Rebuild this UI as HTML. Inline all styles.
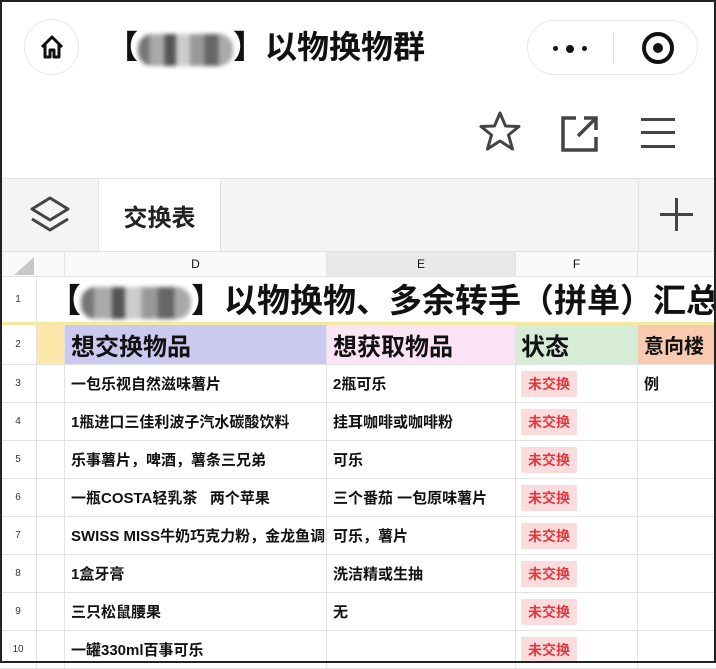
<!DOCTYPE html>
<html><head><meta charset="utf-8"><style>
*{margin:0;padding:0;box-sizing:border-box}
body{width:716px;height:663px;overflow:hidden;background:#fff;font-family:"Liberation Sans","Noto Sans CJK SC",sans-serif;position:relative;color:#111}
.frame{position:absolute;left:0;top:0;width:716px;height:663px;border:2px solid #222;z-index:10;pointer-events:none}
.abs{position:absolute}
.blur{display:inline-block;width:100px;height:32px;vertical-align:middle;background:linear-gradient(90deg,#777 0 12%,#aaa 12% 28%,#555 28% 40%,#ccc 40% 55%,#999 55% 70%,#666 70% 85%,#aaa 85%);filter:blur(2px);border-radius:14px}
.row{position:absolute;left:0;width:716px;border-bottom:1px solid #e3e3e3}
.c{position:absolute;top:0;height:100%;display:flex;align-items:center;border-right:1px solid #e3e3e3;font-size:15px;font-weight:bold;white-space:nowrap;overflow:hidden}
.rn{left:0;width:37px;justify-content:center;font-size:10px;font-weight:normal;color:#333}
.s{left:37px;width:28px}
.d{left:65px;width:262px;padding-left:6px}
.e{left:327px;width:189px;padding-left:6px}
.f{left:516px;width:122px;padding-left:5px}
.g{left:638px;width:78px;padding-left:6px;border-right:none}
.b{background:#fbdcdc;color:#e0383e;font-size:14px;padding:3px 7px;border-radius:2px}
</style></head><body>
<div class="frame"></div>
<div class="abs" style="left:24px;top:19px;width:55px;height:56px;border:1px solid #e8e8e8;border-radius:50%;display:flex;align-items:center;justify-content:center">
<svg width="26" height="26" viewBox="0 0 26 26"><path d="M3 13 L13 3 L23 13 M6 10 V23 H11 V16 H15 V23 H20 V10" fill="none" stroke="#111" stroke-width="3" stroke-linejoin="round"/></svg></div>
<div class="abs" style="left:106px;top:26px;font-size:32px;font-weight:bold;line-height:42px;white-space:nowrap">【<span class="blur" style="width:95px"></span>】以物换物群</div>
<div class="abs" style="left:527px;top:20px;width:171px;height:55px;border:1px solid #e8e8e8;border-radius:28px">
<div class="abs" style="left:25px;top:25px;width:5px;height:5px;background:#111;border-radius:50%"></div>
<div class="abs" style="left:38px;top:24px;width:8px;height:8px;background:#111;border-radius:50%"></div>
<div class="abs" style="left:54px;top:25px;width:5px;height:5px;background:#111;border-radius:50%"></div>
<div class="abs" style="left:85px;top:12px;width:1px;height:30px;background:#e0e0e0"></div>
<div class="abs" style="left:114px;top:11px;width:32px;height:32px;border:4px solid #111;border-radius:50%"><div class="abs" style="left:7px;top:7px;width:10px;height:10px;background:#111;border-radius:50%"></div></div>
</div>
<svg class="abs" style="left:478px;top:110px" width="44" height="44" viewBox="0 0 44 44"><path d="M22 3 L27.5 16 L41 16.5 L30.5 25 L34.5 39 L22 31 L9.5 39 L13.5 25 L3 16.5 L16.5 16 Z" fill="none" stroke="#444" stroke-width="3" stroke-linejoin="round"/></svg>
<svg class="abs" style="left:560px;top:114px" width="40" height="40" viewBox="0 0 40 40"><path d="M16 4 H3 V36 H36 V23" fill="none" stroke="#444" stroke-width="3.5"/><path d="M18 22 L35 5 M24 4 H36 V16" fill="none" stroke="#444" stroke-width="3.5"/></svg>
<div class="abs" style="left:641px;top:118px;width:34px;height:3px;background:#444"></div>
<div class="abs" style="left:641px;top:131px;width:34px;height:3px;background:#444"></div>
<div class="abs" style="left:641px;top:145px;width:34px;height:3px;background:#444"></div>
<div class="abs" style="left:0;top:178px;width:716px;height:74px;background:#f3f4f6;border-top:1px solid #e2e2e2;border-bottom:1px solid #e2e2e2"></div>
<svg class="abs" style="left:28px;top:195px" width="44" height="38" viewBox="0 0 44 38"><path d="M22 3 L40 14 L22 25 L4 14 Z" fill="none" stroke="#444" stroke-width="3" stroke-linejoin="round"/><path d="M4 24 L22 35 L40 24" fill="none" stroke="#444" stroke-width="3" stroke-linejoin="round"/></svg>
<div class="abs" style="left:98px;top:179px;width:123px;height:72px;background:#fff;border-left:1px solid #e2e2e2;border-right:1px solid #e2e2e2;font-size:24px;font-weight:bold;display:flex;align-items:center;justify-content:center;color:#222">交换表</div>
<div class="abs" style="left:638px;top:179px;width:1px;height:72px;background:#e2e2e2"></div>
<div class="abs" style="left:660px;top:213px;width:33px;height:3px;background:#444"></div>
<div class="abs" style="left:675px;top:198px;width:3px;height:33px;background:#444"></div>
<div class="row" style="top:252px;height:25px;background:#fafafa">
<svg class="abs" style="left:12px;top:5px" width="22" height="18"><path d="M22 0 V18 H2 Z" fill="#c8c8c8"/></svg>
<div class="c s" style="left:37px"></div>
<div class="c d" style="justify-content:center;padding:0;font-weight:normal;font-size:12px">D</div>
<div class="c e" style="justify-content:center;padding:0;font-weight:normal;font-size:12px;background:#e9e9e9">E</div>
<div class="c f" style="justify-content:center;padding:0;font-weight:normal;font-size:12px">F</div>
<div class="c g"></div>
</div>
<div class="row" style="top:277px;height:48px;border-bottom:3px solid #f5e9a0">
<div class="c rn" style="border-right:1px solid #e3e3e3">1</div>
<div class="abs" style="left:48px;top:3px;font-size:33px;font-weight:bold;white-space:nowrap;line-height:42px">【<span class="blur" style="width:110px"></span>】以物换物、多余转手（拼单）汇总</div>
</div>
<div class="row" style="top:325px;height:40px">
<div class="c rn">2</div>
<div class="c s" style="background:#fde8ab"></div>
<div class="c d" style="background:#ccc9f0;font-size:24px">想交换物品</div>
<div class="c e" style="background:#fbe4f6;font-size:24px">想获取物品</div>
<div class="c f" style="background:#d7ecd6;font-size:24px">状态</div>
<div class="c g" style="background:#f8cab0;font-size:20px">意向楼（</div>
</div>
<div class="row" style="top:365px;height:38px"><div class="c rn">3</div><div class="c s"></div><div class="c d">一包乐视自然滋味薯片</div><div class="c e">2瓶可乐</div><div class="c f"><span class="b">未交换</span></div><div class="c g">例</div></div>
<div class="row" style="top:403px;height:38px"><div class="c rn">4</div><div class="c s"></div><div class="c d">1瓶进口三佳利波子汽水碳酸饮料</div><div class="c e">挂耳咖啡或咖啡粉</div><div class="c f"><span class="b">未交换</span></div><div class="c g"></div></div>
<div class="row" style="top:441px;height:38px"><div class="c rn">5</div><div class="c s"></div><div class="c d">乐事薯片，啤酒，薯条三兄弟</div><div class="c e">可乐</div><div class="c f"><span class="b">未交换</span></div><div class="c g"></div></div>
<div class="row" style="top:479px;height:38px"><div class="c rn">6</div><div class="c s"></div><div class="c d">一瓶COSTA轻乳茶&nbsp;&nbsp;&nbsp;两个苹果</div><div class="c e">三个番茄 一包原味薯片</div><div class="c f"><span class="b">未交换</span></div><div class="c g"></div></div>
<div class="row" style="top:517px;height:38px"><div class="c rn">7</div><div class="c s"></div><div class="c d">SWISS MISS牛奶巧克力粉，金龙鱼调和油</div><div class="c e">可乐，薯片</div><div class="c f"><span class="b">未交换</span></div><div class="c g"></div></div>
<div class="row" style="top:555px;height:38px"><div class="c rn">8</div><div class="c s"></div><div class="c d">1盒牙膏</div><div class="c e">洗洁精或生抽</div><div class="c f"><span class="b">未交换</span></div><div class="c g"></div></div>
<div class="row" style="top:593px;height:38px"><div class="c rn">9</div><div class="c s"></div><div class="c d">三只松鼠腰果</div><div class="c e">无</div><div class="c f"><span class="b">未交换</span></div><div class="c g"></div></div>
<div class="row" style="top:631px;height:38px"><div class="c rn">10</div><div class="c s"></div><div class="c d">一罐330ml百事可乐</div><div class="c e"></div><div class="c f"><span class="b">未交换</span></div><div class="c g"></div></div>
</body></html>
